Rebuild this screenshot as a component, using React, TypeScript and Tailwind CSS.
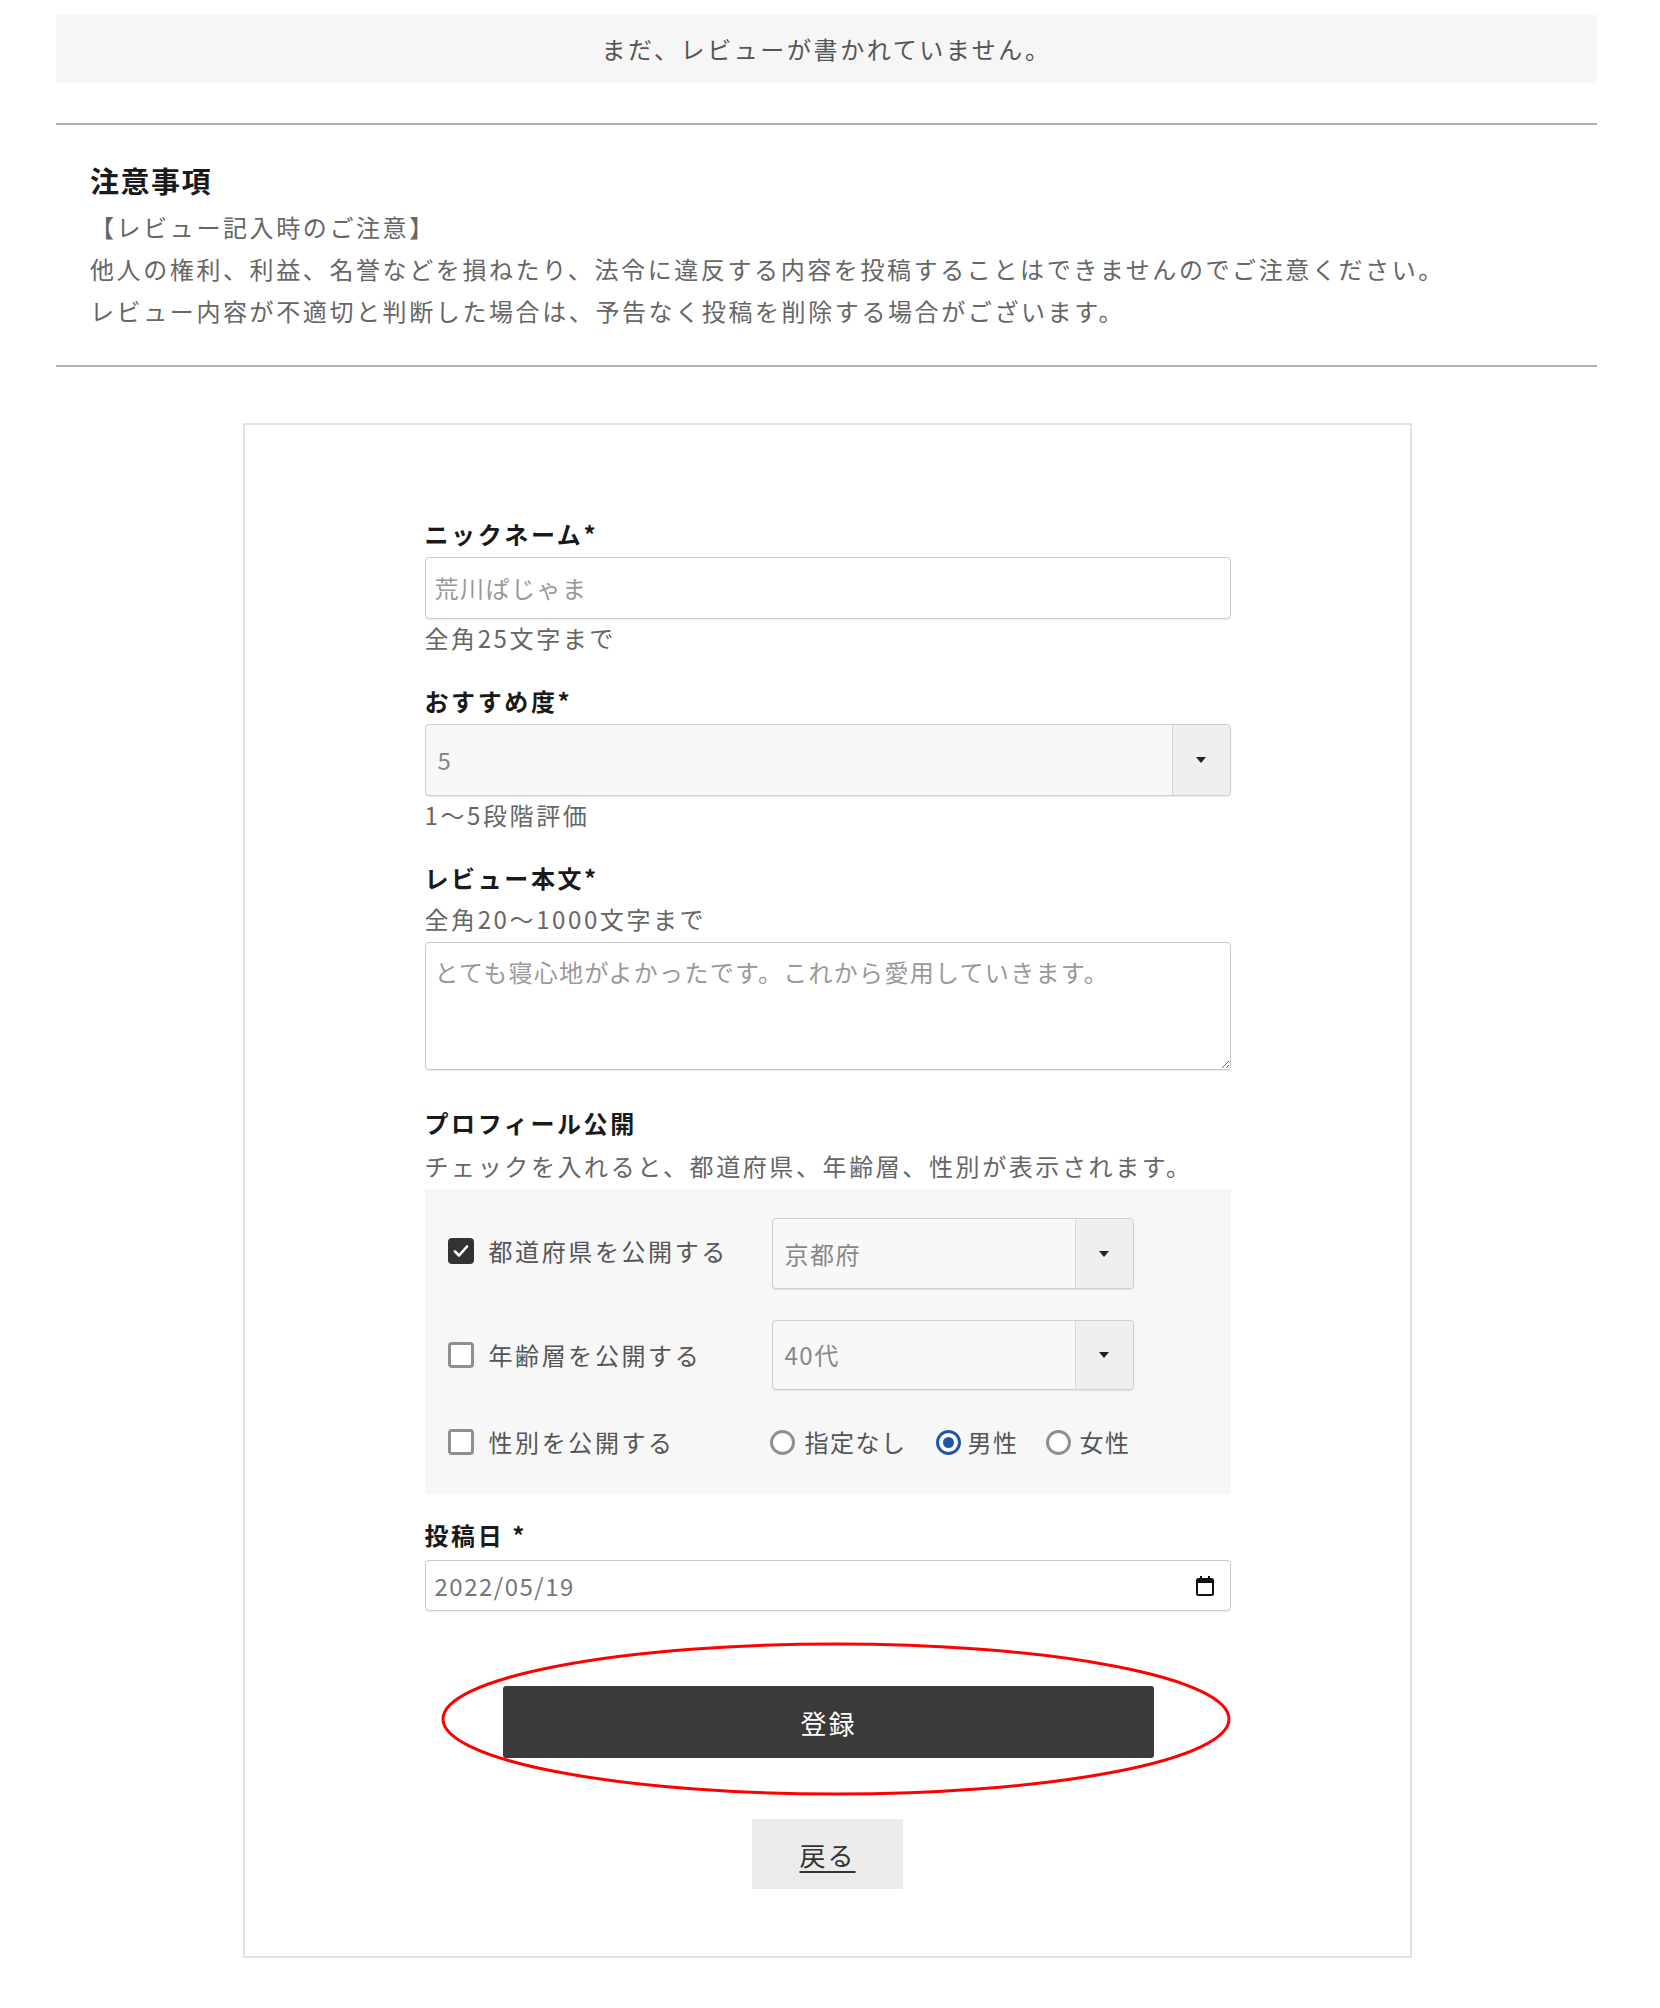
import React from 'react'

const jp = "font-['Noto_Sans_CJK_JP','Noto_Sans_CJK_SC',sans-serif]"

function Caret() {
  return (
    <svg width="10" height="6" viewBox="0 0 10 6" className="block">
      <polygon points="0,0 10,0 5,6" fill="#222" />
    </svg>
  )
}

function SelectBox({ value, className }: { value: string; className: string }) {
  return (
    <div className={`flex rounded-[4px] border border-[#cfcfcf] bg-[#f8f8f8] shadow-[0_1px_1px_rgba(0,0,0,0.08)] ${className}`}>
      <div className="flex flex-1 items-center pl-[12px] tracking-[1.5px] text-[#888]">{value}</div>
      <div className="flex w-[58px] items-center justify-center rounded-r-[4px] border-l border-[#dadada] bg-[#efefef]">
        <Caret />
      </div>
    </div>
  )
}

function Checkbox({ checked }: { checked?: boolean }) {
  if (checked) {
    return (
      <div className="flex h-[26px] w-[26px] shrink-0 items-center justify-center rounded-[4px] bg-[#333]">
        <svg width="18" height="18" viewBox="0 0 18 18">
          <path d="M3 9.5l4 4L15 4.5" fill="none" stroke="#fff" strokeWidth="2.6" strokeLinecap="round" strokeLinejoin="round" />
        </svg>
      </div>
    )
  }
  return <div className="h-[26px] w-[26px] shrink-0 rounded-[4px] border-[3px] border-[#8f8f8f] bg-white" />
}

function Radio({ checked }: { checked?: boolean }) {
  if (checked) {
    return (
      <div className="flex h-[25px] w-[25px] shrink-0 items-center justify-center rounded-full border-[3px] border-[#1f57a8] bg-white">
        <div className="h-[11px] w-[11px] rounded-full bg-[#1f57a8]" />
      </div>
    )
  }
  return <div className="h-[25px] w-[25px] shrink-0 rounded-full border-[3px] border-[#8f8f8f] bg-white" />
}

function Label({ children }: { children: React.ReactNode }) {
  return <p className="h-[32px] text-[24px] leading-[32px] font-bold text-[#1a1a1a]">{children}</p>
}

function Help({ children, className = '' }: { children: React.ReactNode; className?: string }) {
  return <p className={`h-[32px] text-[24px] leading-[32px] text-[#666] ${className}`}>{children}</p>
}

export default function App() {
  return (
    <div className={`${jp} min-h-[2008px] w-[1660px] bg-white pt-[15px] pr-[63px] pl-[56px] tracking-[2.6px]`}>
      {/* no reviews */}
      <div className="flex h-[68px] items-center justify-center bg-[#f6f6f6] text-[24px] text-[#555]">
        まだ、レビューが書かれていません。
      </div>

      <div className="mt-[40px] h-[2px] bg-[#b2b2b2]" />

      {/* notice */}
      <div className="px-[34px] pt-[35px] pb-[33px]">
        <h2 className="h-[40px] text-[29px] leading-[40px] font-bold tracking-[1.5px] text-[#1a1a1a]">注意事項</h2>
        <div className="mt-[6px] text-[24px] leading-[42px] text-[#666]">
          <p>【レビュー記入時のご注意】</p>
          <p>他人の権利、利益、名誉などを損ねたり、法令に違反する内容を投稿することはできませんのでご注意ください。</p>
          <p>レビュー内容が不適切と判断した場合は、予告なく投稿を削除する場合がございます。</p>
        </div>
      </div>

      <div className="h-[2px] bg-[#b2b2b2]" />

      {/* form card */}
      <div className="mt-[56px] ml-[187px] w-[1169px] border-2 border-[#e2e2e2] pt-[93px] pb-[67px]">
        <div className="mx-auto w-[806px]">
          <Label>ニックネーム*</Label>
          <div className="mt-[7px] flex h-[62px] items-center rounded-[4px] border border-[#c9c9c9] bg-white pl-[9px] text-[24px] tracking-[1.5px] text-[#999] shadow-[0_1px_1px_rgba(0,0,0,0.08)]">
            荒川ぱじゃま
          </div>
          <Help className="mt-[3px]">全角25文字まで</Help>

          <div className="mt-[31px]">
            <Label>おすすめ度*</Label>
          </div>
          <SelectBox value="5" className="mt-[7px] h-[72px] text-[24px]" />
          <Help className="mt-[3px]">1〜5段階評価</Help>

          <div className="mt-[31px]">
            <Label>レビュー本文*</Label>
          </div>
          <Help className="mt-[9px]">全角20〜1000文字まで</Help>
          <textarea
            className="mt-[7px] block h-[128px] w-full resize-y rounded-[4px] border border-[#c9c9c9] bg-white px-[9px] pt-[13px] text-[24px] leading-[32px] tracking-[1.3px] text-[#999] placeholder:text-[#999] shadow-[0_1px_1px_rgba(0,0,0,0.08)] outline-none"
            placeholder="とても寝心地がよかったです。これから愛用していきます。"
          />

          <div className="mt-[37px]">
            <Label>プロフィール公開</Label>
          </div>
          <Help className="mt-[11px]">チェックを入れると、都道府県、年齢層、性別が表示されます。</Help>

          <div className="mt-[7px] bg-[#f7f7f7] pt-[29px] pb-[36px] pl-[23px] text-[24px] text-[#555]">
            <div className="flex items-center">
              <div className="mb-[6px] flex w-[324px] items-center gap-[15px]">
                <Checkbox checked />
                <span>都道府県を公開する</span>
              </div>
              <SelectBox value="京都府" className="h-[71px] w-[362px]" />
            </div>
            <div className="mt-[31px] flex items-center">
              <div className="flex w-[324px] items-center gap-[15px]">
                <Checkbox />
                <span>年齢層を公開する</span>
              </div>
              <SelectBox value="40代" className="h-[70px] w-[362px]" />
            </div>
            <div className="mt-[36px] flex h-[32px] items-center">
              <div className="flex w-[322px] items-center gap-[15px]">
                <Checkbox />
                <span>性別を公開する</span>
              </div>
              <div className="flex items-center tracking-[1.5px]">
                <Radio />
                <span className="ml-[10px]">指定なし</span>
                <span className="ml-[29px]"><Radio checked /></span>
                <span className="ml-[7px]">男性</span>
                <span className="ml-[27px]"><Radio /></span>
                <span className="ml-[9px]">女性</span>
              </div>
            </div>
          </div>

          <div className="mt-[25px]">
            <Label>投稿日 *</Label>
          </div>
          <div className="mt-[9px] flex h-[51px] items-center justify-between rounded-[4px] border border-[#c9c9c9] bg-white pr-[16px] pl-[9px] text-[24px] tracking-[1.5px] text-[#777] shadow-[0_1px_1px_rgba(0,0,0,0.08)]">
            <span>2022/05/19</span>
            <svg width="18" height="21" viewBox="0 0 18 21">
              <rect x="1" y="4" width="16" height="16" rx="1.5" fill="none" stroke="#111" strokeWidth="2" />
              <rect x="1" y="4" width="16" height="4" fill="#111" />
              <rect x="4" y="1" width="2" height="4" fill="#111" />
              <rect x="12" y="1" width="2" height="4" fill="#111" />
            </svg>
          </div>

          {/* submit */}
          <div className="mt-[75px] flex justify-center">
            <div className="relative ml-[2px]">
              <button
                type="button"
                className="flex h-[72px] w-[651px] items-center justify-center rounded-[3px] bg-[#3a3a3a] text-[26px] tracking-[2px] text-white"
              >
                登録
              </button>
              <svg
                className="pointer-events-none absolute top-[-45px] left-[-63px]"
                width="792"
                height="156"
                viewBox="0 0 792 156"
              >
                <ellipse cx="396" cy="78" rx="393" ry="75" fill="none" stroke="#ff0000" strokeWidth="3" />
              </svg>
            </div>
          </div>

          <div className="mt-[61px] flex justify-center">
            <button
              type="button"
              className="flex h-[70px] w-[151px] items-center justify-center bg-[#ebebeb] text-[26px] tracking-[2px] text-[#333] underline underline-offset-[5px]"
            >
              戻る
            </button>
          </div>
        </div>
      </div>
    </div>
  )
}
